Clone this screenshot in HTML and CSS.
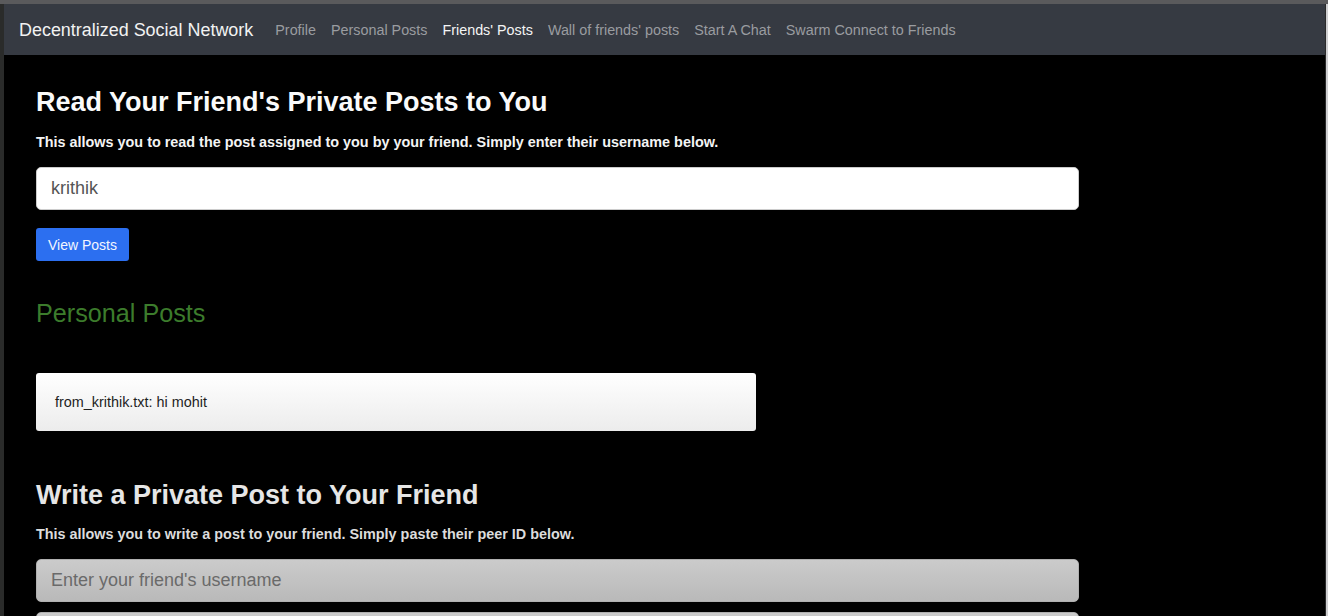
FILE: index.html
```html
<!DOCTYPE html>
<html lang="en">
<head>
<meta charset="utf-8">
<title>Decentralized Social Network</title>
<link rel="stylesheet" href="styles.css">
</head>
<body>
<div class="top-edge"></div>
<div class="frame">
  <div class="left-edge"></div>
  <div class="page">
    <nav class="navbar">
      <span class="brand">Decentralized Social Network</span>
      <ul class="nav-links">
        <li><a href="#">Profile</a></li>
        <li><a href="#">Personal Posts</a></li>
        <li><a href="#" class="active">Friends' Posts</a></li>
        <li><a href="#">Wall of friends' posts</a></li>
        <li><a href="#">Start A Chat</a></li>
        <li><a href="#">Swarm Connect to Friends</a></li>
      </ul>
    </nav>
    <main class="content">
      <section class="section">
        <h2 class="title">Read Your Friend's Private Posts to You</h2>
        <p class="lead">This allows you to read the post assigned to you by your friend. Simply enter their username below.</p>
        <input class="field" type="text" value="krithik">
        <button class="btn">View Posts</button>
        <h3 class="green-title">Personal Posts</h3>
        <div class="post-card">from_krithik.txt: hi mohit</div>
      </section>
      <section class="section second">
        <h2 class="title dim">Write a Private Post to Your Friend</h2>
        <p class="lead dim">This allows you to write a post to your friend. Simply paste their peer ID below.</p>
        <input class="field grey" type="text" placeholder="Enter your friend's username">
        <input class="field grey" type="text" placeholder="">
      </section>
    </main>
  </div>
  <div class="right-edge"></div>
</div>
</body>
</html>
```
FILE: styles.css
```css
* { box-sizing: border-box; }
html, body { margin: 0; padding: 0; height: 100%; overflow: hidden; }
body {
  background: #000;
  font-family: "Liberation Sans", Arial, sans-serif;
  color: #fff;
}
.top-edge { height: 4px; background: #5a5a5c; }
.frame { display: flex; height: 612px; }
.left-edge { width: 4px; background: #2a2b2a; flex: none; }
.right-edge { width: 3px; background: #cfcfd1; flex: none; border-left: 1px solid #2a2a2a; }
.page { flex: 1; background: #000; overflow: hidden; }

.navbar {
  height: 51px;
  background: #363a42;
  display: flex;
  align-items: center;
  padding-left: 15px;
}
.brand { font-size: 17.95px; color: #f2f2f2; margin-right: 14.5px; position: relative; top: 1px; }
.nav-links { list-style: none; display: flex; margin: 0; padding: 0; }
.nav-links a {
  display: block;
  padding: 0 7.5px;
  font-size: 14.35px;
  color: #9a9ca0;
  text-decoration: none;
}
.nav-links a.active { color: #f4f4f4; }

.content { padding: 0 32px; }
.section { width: 1043px; }
.title {
  font-size: 27px;
  font-weight: bold;
  margin: 30px 0 0;
  line-height: 34px;
  color: #fafafa;
}
.title.dim { color: #e6e6e6; }
.lead {
  font-size: 14.4px;
  font-weight: bold;
  margin: 14px 0 16px;
  line-height: 18px;
  color: #f4f4f4;
}
.lead.dim { color: #dcdcdc; }
.field {
  display: block;
  width: 100%;
  height: 43px;
  border: 1px solid #ccc;
  border-radius: 5px;
  padding: 0 14px;
  font-family: inherit;
  font-size: 18px;
  color: #555;
  background: #fff;
  outline: none;
}
.field.grey {
  background: linear-gradient(#cbcbcb, #b9b9b9);
  border-color: #b0b0b0;
  height: 43px;
  margin-bottom: 10px;
}
.field.grey::placeholder { color: #6a6a6a; }
.btn {
  margin-top: 18px;
  height: 33px;
  padding: 0 12px;
  border: none;
  border-radius: 3px;
  background: #2c6ff0;
  color: #f2f6ff;
  font-family: inherit;
  font-size: 14px;
}
.green-title {
  font-size: 25.2px;
  font-weight: normal;
  color: #3c7c2c;
  margin: 37px 0 0;
  line-height: 30px;
}
.post-card {
  width: 720px;
  height: 58px;
  margin-top: 45px;
  border-radius: 3px;
  background: linear-gradient(#ffffff, #ececec);
  color: #1e1e1e;
  font-size: 14.4px;
  padding: 0 19px;
  display: flex;
  align-items: center;
}
.section.second .title { margin-top: 47px; }
.section.second .lead { margin-top: 13px; margin-bottom: 16px; }
```
